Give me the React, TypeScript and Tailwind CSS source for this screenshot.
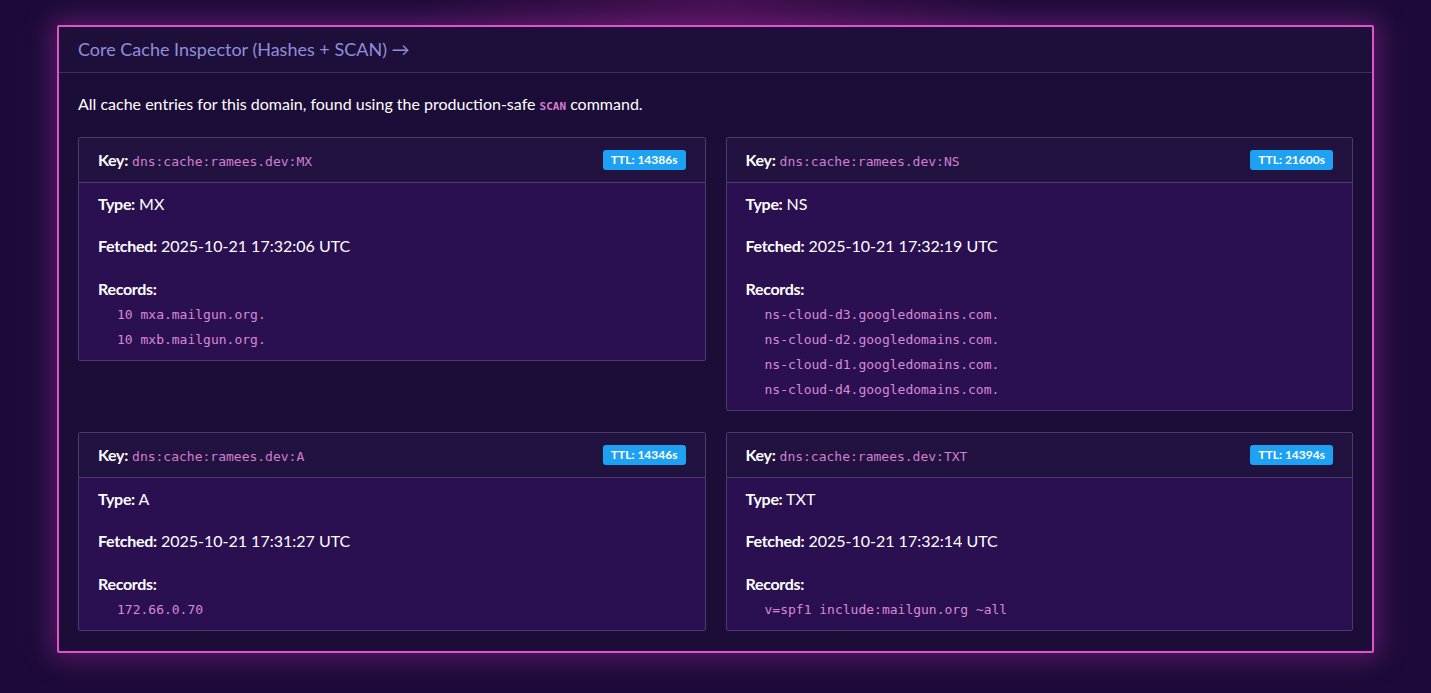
import React from 'react';

interface CacheEntry {
  key: string;
  ttl: number;
  type: string;
  fetched: string;
  records: string[];
}

const entries: CacheEntry[] = [
  {
    key: 'dns:cache:ramees.dev:MX',
    ttl: 14386,
    type: 'MX',
    fetched: '2025-10-21 17:32:06 UTC',
    records: ['10 mxa.mailgun.org.', '10 mxb.mailgun.org.'],
  },
  {
    key: 'dns:cache:ramees.dev:NS',
    ttl: 21600,
    type: 'NS',
    fetched: '2025-10-21 17:32:19 UTC',
    records: [
      'ns-cloud-d3.googledomains.com.',
      'ns-cloud-d2.googledomains.com.',
      'ns-cloud-d1.googledomains.com.',
      'ns-cloud-d4.googledomains.com.',
    ],
  },
  {
    key: 'dns:cache:ramees.dev:A',
    ttl: 14346,
    type: 'A',
    fetched: '2025-10-21 17:31:27 UTC',
    records: ['172.66.0.70'],
  },
  {
    key: 'dns:cache:ramees.dev:TXT',
    ttl: 14394,
    type: 'TXT',
    fetched: '2025-10-21 17:32:14 UTC',
    records: ['v=spf1 include:mailgun.org ~all'],
  },
];

const sans = "font-['Lato','Noto_Sans',sans-serif]";
const mono = "font-['DejaVu_Sans_Mono','Liberation_Mono',monospace]";

function EntryCard({ entry }: { entry: CacheEntry }) {
  return (
    <div className="border border-[#4a3b6b] rounded-[2px] bg-[#2a1050]">
      {/* Card header */}
      <div className="h-[45px] px-[19px] flex items-center justify-between bg-[#221240] border-b border-[#4a3b6b]">
        <div className="flex items-baseline gap-[4px]">
          <span className="text-white font-bold text-[16px] tracking-[-0.3px]">Key:</span>
          <span className={`${mono} text-[13px] text-[#d27fd0]`}>{entry.key}</span>
        </div>
        <span className="bg-[#1da1f2] text-white font-bold text-[12px] leading-none px-[8px] h-[20px] flex items-center rounded-[3px]">
          TTL: {entry.ttl}s
        </span>
      </div>

      {/* Card body */}
      <div className="px-[19px] pt-[9px] pb-[10px] text-[16px] text-white">
        <div className="h-6 leading-6">
          <span className="font-bold tracking-[-0.3px]">Type:</span> {entry.type}
        </div>
        <div className="h-6 leading-6 mt-[18px]">
          <span className="font-bold tracking-[-0.3px]">Fetched:</span> {entry.fetched}
        </div>
        <div className="h-6 leading-6 mt-[19px] font-bold tracking-[-0.3px]">Records:</div>
        <ul className="mt-[4px] pl-[19px] flex flex-col gap-[5px]">
          {entry.records.map((r) => (
            <li key={r} className={`${mono} text-[13px] leading-5 text-[#d88ad6]`}>
              {r}
            </li>
          ))}
        </ul>
      </div>
    </div>
  );
}

export default function App() {
  return (
    <div
      className={`${sans} min-h-[693px] w-full pt-[25px] pb-[40px] bg-[#1c0b38] bg-[radial-gradient(ellipse_at_top,#42104f_0%,#1c0b38_30%)]`}
    >
      <div className="mx-auto w-[1317px] border-2 border-[#e054c9] rounded-[2px] bg-[#1c0c38] shadow-[0_0_26px_6px_rgba(200,50,190,0.35)]">
        {/* Panel header */}
        <div className="h-[46px] px-[19px] flex items-center border-b border-[#3f2e5e] bg-[#1d0e3a]">
          <h2 className="text-[18px] text-[#8f8fdc]">Core Cache Inspector (Hashes + SCAN) →</h2>
        </div>

        {/* Panel body */}
        <div className="px-[19px] pt-[19px] pb-[20px]">
          <p className="text-[16px] leading-6 text-white mb-[18px]">
            All cache entries for this domain, found using the production-safe{' '}
            <code className={`${mono} text-[11px] text-[#d27fd0] font-bold`}>SCAN</code> command.
          </p>

          <div className="grid grid-cols-2 gap-x-5 gap-y-[21px] items-start">
            {entries.map((e) => (
              <EntryCard key={e.key} entry={e} />
            ))}
          </div>
        </div>
      </div>
    </div>
  );
}
